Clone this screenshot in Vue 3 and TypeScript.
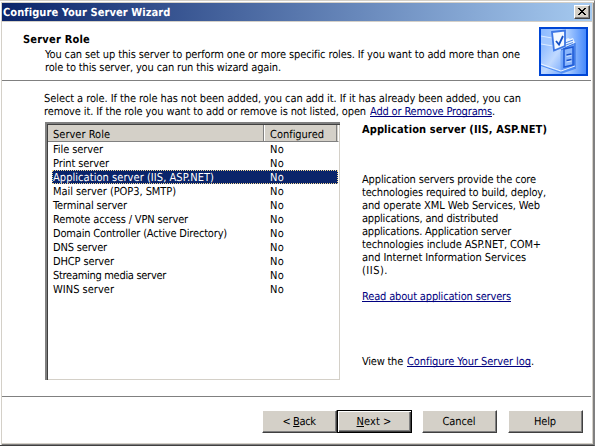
<script setup lang="ts">
import { ref } from 'vue'

interface Role { name: string; width: number }
interface Line { text: string; width: number }

const roles: Role[] = [
  { name: 'File server', width: 50 },
  { name: 'Print server', width: 56 },
  { name: 'Application server (IIS, ASP.NET)', width: 161 },
  { name: 'Mail server (POP3, SMTP)', width: 123 },
  { name: 'Terminal server', width: 74 },
  { name: 'Remote access / VPN server', width: 135 },
  { name: 'Domain Controller (Active Directory)', width: 174 },
  { name: 'DNS server', width: 54 },
  { name: 'DHCP server', width: 61 },
  { name: 'Streaming media server', width: 113 },
  { name: 'WINS server', width: 61 },
]
const selected = ref(2)

const details: Line[] = [
  { text: 'Application servers provide the core', width: 174 },
  { text: 'technologies required to build, deploy,', width: 184 },
  { text: 'and operate XML Web Services, Web', width: 178 },
  { text: 'applications, and distributed', width: 136 },
  { text: 'applications. Application server', width: 149 },
  { text: 'technologies include ASP.NET, COM+', width: 179 },
  { text: 'and Internet Information Services', width: 164 },
  { text: '(IIS).', width: 26 },
]

// Spreads the letters of a label so that it takes up the given width.
const vFit = {
  mounted(el: HTMLElement, binding: { value: number }) {
    const natural = el.getBoundingClientRect().width
    const count = (el.textContent ?? '').length
    el.style.letterSpacing = `${(binding.value - natural) / count}px`
  },
}
</script>

<template>
  <div class="window">
    <header class="titlebar">
      <span v-fit="167" class="t">Configure Your Server Wizard</span>
      <button class="close" aria-label="Close">
        <svg width="8" height="7" viewBox="0 0 8 7" shape-rendering="crispEdges">
          <path d="M0 0h2v1h1v1h2v-1h1v-1h2v1h-1v1h-1v1h-1v1h1v1h1v1h1v1h-2v-1h-1v-1h-2v1h-1v1h-2v-1h1v-1h1v-1h1v-1h-1v-1h-1v-1h-1z" />
        </svg>
      </button>
    </header>

    <section class="banner">
      <div class="intro">
        <h1><span v-fit="67" class="t">Server Role</span></h1>
        <p><span v-fit="475" class="t">You can set up this server to perform one or more specific roles. If you want to add more than one</span></p>
        <p><span v-fit="236" class="t">role to this server, you can run this wizard again.</span></p>
      </div>
      <svg class="logo" width="49" height="49" viewBox="0 0 49 49">
        <defs>
          <linearGradient id="sky" x1="0" y1="0" x2="1" y2="0">
            <stop offset="0" stop-color="#8ab8ff" /><stop offset=".55" stop-color="#b4d3ff" /><stop offset="1" stop-color="#3d83fb" />
          </linearGradient>
          <linearGradient id="side" x1="0" y1="0" x2="1" y2="1">
            <stop offset="0" stop-color="#8bb8ff" /><stop offset=".55" stop-color="#c0d9ff" /><stop offset="1" stop-color="#7daefd" />
          </linearGradient>
          <linearGradient id="front" x1="0" y1="0" x2="1" y2="1">
            <stop offset="0" stop-color="#8dbaff" /><stop offset="1" stop-color="#3d7df0" />
          </linearGradient>
        </defs>
        <rect width="49" height="49" fill="url(#sky)" />
        <path d="M2 9L14 11L36 15L23 24L2 17Z" fill="#a4c8ff" />
        <path d="M2 17L22 23V47H2Z" fill="url(#side)" />
        <path d="M2 9L13 11M2 17L14 19" stroke="#dcebff" fill="none" />
        <path d="M22 23L36 16V42L22 47Z" fill="url(#front)" />
        <path d="M22 23L36 16V42" stroke="#2c68dc" fill="none" />
        <path d="M22 24V44" stroke="#79aafb" fill="none" />
        <path d="M2 37L22 44L36 39" stroke="#e8f2ff" fill="none" />
        <path d="M2 38.500L22 45.500L36 41" stroke="#4d8df5" fill="none" />
        <path d="M25 22L34 20V38L25 40Z" fill="#8bb6fc" stroke="#1c58d4" stroke-width="1.500" />
        <path d="M27.500 28L32.500 27M27.500 33.500L32.500 32.500" stroke="#1850c9" stroke-width="1.500" />
        <path d="M27.500 29.500L32.500 28.500M27.500 35L32.500 34" stroke="#d0e3ff" />
        <path d="M25 14L29 11L31 12L34 11L36 16L28 19L25 20Z" fill="#e9f3ff" />
        <path d="M26 16L34 13M27 18L34 15.500" stroke="#4d86e8" />
        <path d="M13 5L26 3.500V19L15 23.500Z" fill="#f4f9ff" stroke="#3c76e4" stroke-width="1.800" />
        <path d="M17 14L20 17.500L24 9" stroke="#1650c4" stroke-width="1.800" fill="none" />
        <rect x="1" y="1" width="47" height="47" fill="none" stroke="#0046d5" stroke-width="2" />
      </svg>
    </section>

    <main class="body">
      <div class="lead">
        <p><span v-fit="477" class="t">Select a role. If the role has not been added, you can add it. If it has already been added, you can</span></p>
        <p><span v-fit="322" class="t">remove it. If the role you want to add or remove is not listed, open</span><span v-fit="125" class="t tail"><a href="#">Add or Remove Programs</a>.</span></p>
      </div>

      <div class="columns">
        <div class="list">
          <div class="thead">
            <div class="th first"><span v-fit="57" class="t">Server Role</span></div>
            <div class="th second"><span v-fit="54" class="t">Configured</span></div>
          </div>
          <div v-for="(role, i) in roles" :key="role.name" class="row" :class="{ on: i === selected }" @click="selected = i">
            <div class="name"><span v-fit="role.width" class="t">{{ role.name }}</span></div>
            <div><span v-fit="14" class="t">No</span></div>
          </div>
        </div>

        <aside class="info">
          <h2><span v-fit="185" class="t">Application server (IIS, ASP.NET)</span></h2>
          <div class="details">
            <p v-for="line in details" :key="line.text"><span v-fit="line.width" class="t">{{ line.text }}</span></p>
          </div>
          <p class="more"><a v-fit="149" href="#" class="t">Read about application servers</a></p>
          <p class="log"><span v-fit="41" class="t">View the</span><span v-fit="127" class="t tail"><a href="#">Configure Your Server log</a>.</span></p>
        </aside>
      </div>
    </main>

    <footer class="actions">
      <button class="btn"><span v-fit="33" class="t">&lt; <u>B</u>ack</span></button>
      <button class="btn default"><span v-fit="35" class="t"><u>N</u>ext &gt;</span></button>
      <button class="btn cancel"><span v-fit="33" class="t">Cancel</span></button>
      <button class="btn help"><span v-fit="22" class="t">Help</span></button>
    </footer>
  </div>
</template>

<style>
body { margin: 0; overflow: hidden; }
</style>

<style scoped>
* { box-sizing: border-box; }
.window {
  width: 595px; height: 446px; background: #fff; color: #000;
  font: 11px/13px "DejaVu Sans Condensed", "DejaVu Sans", sans-serif;
  font-stretch: condensed; text-rendering: geometricPrecision;
  border-top: 1px solid #d4d0c8; border-right: 1px solid #808080; border-bottom: 1px solid #404040;
  box-shadow: inset 1px 1px #fff, inset 2px 2px #d4d0c8, inset -1px -1px #808080, inset -2px -2px #d4d0c8;
  padding: 2px; display: flex; flex-direction: column;
}
.t { display: inline-block; white-space: nowrap; }
p, h1, h2 { margin: 0; height: 13px; font-size: 11px; line-height: 13px; white-space: nowrap; }
a { color: #000080; text-decoration: underline; text-underline-offset: 1px; text-decoration-thickness: 1px; text-decoration-skip-ink: none; }
.titlebar {
  flex: none; height: 19px; display: flex; align-items: center; justify-content: space-between;
  padding: 0 2px 0 1px; color: #fff; font-weight: bold;
  background: linear-gradient(90deg, #0a246a, #a6caf0); border-bottom: 1px solid #d4d0c8;
}
.close {
  width: 16px; height: 14px; padding: 0 1px 1px 0; display: flex; align-items: center; justify-content: center;
  background: #d4d0c8; border: 1px solid; border-color: #fff #404040 #404040 #fff;
  box-shadow: inset -1px -1px #808080;
}
.banner {
  flex: none; height: 59px; border-bottom: 1px solid #808080; margin-right: 1px;
  display: flex; justify-content: space-between; padding: 5px 3px 0 21px;
}
.intro { padding-top: 6px; }
.intro h1 { height: 15px; }
.intro p { padding-left: 22px; }
.logo { display: block; flex: none; }
.body { flex: 1; padding: 11px 0 0 42px; min-height: 0; }
.tail { margin-left: 4px; }
.columns { display: flex; margin-top: 4px; }
.list {
  width: 295px; height: 258px; border: solid #808080; border-width: 2px 0 0 2px;
  box-shadow: inset 1px 1px #404040, inset -1px -1px #d4d0c8;
  padding: 1px; margin-left: 1px;
}
.thead { display: flex; height: 17px; background: #d4d0c8; border-bottom: 1px solid #808080; border-right: 1px solid #fff; }
.th { padding: 3px 0 0 5px; border-right: 1px solid #808080; }
.th.first { width: 216px; }
.th.second { width: 73px; border-left: 1px solid #fff; }
.row { display: grid; grid-template-columns: 217px 1fr; height: 14px; line-height: 13px; margin: 0 1px 0 4px; padding: 1px 0 0 1px; }
.on { background: #0a246a; color: #fff; outline: 1px dotted #f5db95; outline-offset: -1px; }
.info { padding: 1px 0 0 22px; }
.details { margin-top: 37px; }
.more { margin-top: 13px; }
.log { margin-top: 52px; }
.log .tail { margin-left: 4px; }
.actions { flex: none; height: 47px; margin-right: 1px; border-top: 1px solid #808080; display: flex; justify-content: flex-end; padding: 13px 8px 0 0; }
.btn {
  width: 75px; height: 23px; padding: 0 1px 1px 0; font: inherit; color: #000; text-rendering: inherit; background: #d4d0c8;
  border: 1px solid; border-color: #fff #404040 #404040 #fff; box-shadow: inset -1px -1px #808080;
}
.default { border-color: #000; box-shadow: inset 1px 1px #fff, inset -1px -1px #404040, inset -2px -2px #808080; }
.cancel { margin-left: 10px; }
.help { margin-left: 11px; }
u { text-underline-offset: 1px; text-decoration-thickness: 1px; }
</style>
